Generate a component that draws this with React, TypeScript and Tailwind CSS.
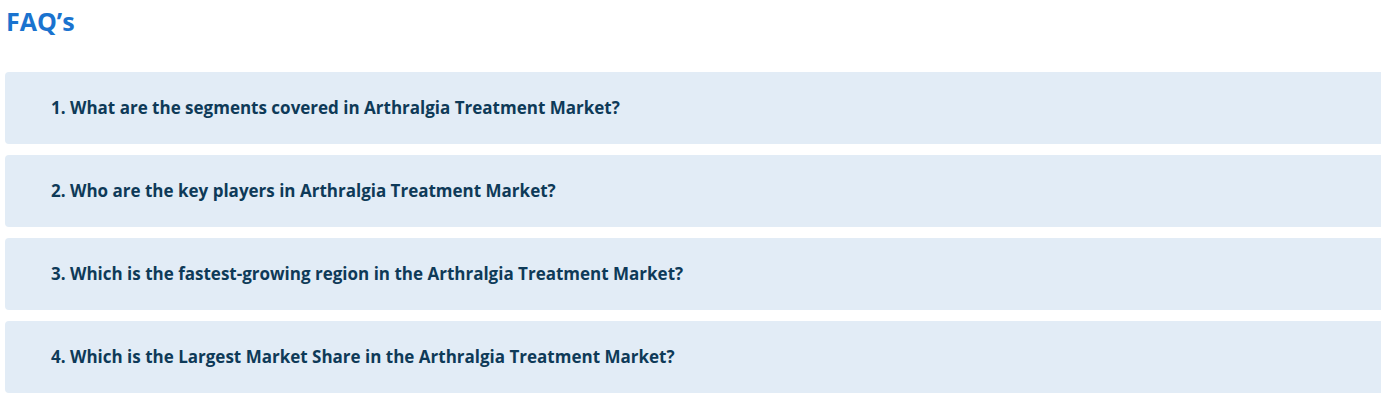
const faqs = [
  "1. What are the segments covered in Arthralgia Treatment Market?",
  "2. Who are the key players in Arthralgia Treatment Market?",
  "3. Which is the fastest-growing region in the Arthralgia Treatment Market?",
  "4. Which is the Largest Market Share in the Arthralgia Treatment Market?",
];

export default function App() {
  return (
    <div className="min-h-[400px] bg-white font-['Open_Sans',sans-serif] overflow-hidden">
      <h2 className="pl-[6px] pt-[5px] text-[25px] leading-[32px] font-bold text-[#1a73cf]">
        FAQ’s
      </h2>
      <div className="mt-[35px] ml-[5px] -mr-[10px] flex flex-col gap-[11px]">
        {faqs.map((q) => (
          <div
            key={q}
            className="h-[72px] rounded-[4px] bg-[#e2ecf6] flex items-center pl-[46px]"
          >
            <span className="text-[17px] font-bold text-[#0e3a58]">{q}</span>
          </div>
        ))}
      </div>
    </div>
  );
}
